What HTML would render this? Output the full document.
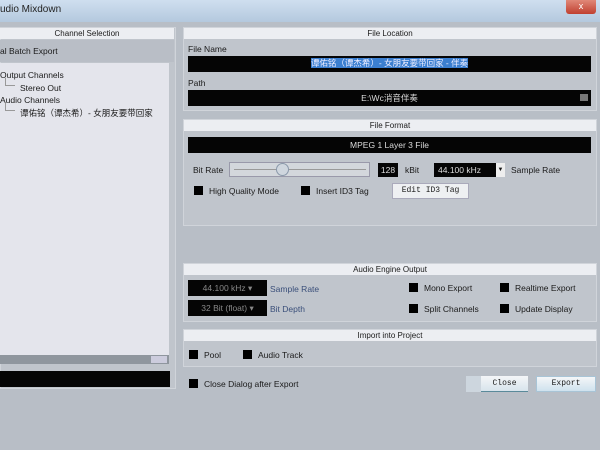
<!DOCTYPE html><html><head><meta charset="utf-8"><style>
*{margin:0;padding:0;box-sizing:border-box}
body{width:600px;height:450px;overflow:hidden;background:#b8bec6;font-family:"Liberation Sans","Noto Sans CJK SC",sans-serif;font-size:8.5px;color:#1a1a1a;position:relative}
.a{position:absolute}
.blk{background:#050505;color:#ddd;text-align:center}
.hdr{background:#eceef2;text-align:center;line-height:11px;font-size:8px}
.box{background:#c0c5cc;border:1px solid #d0d4da}
.cb{width:9px;height:9px;background:#000}
</style></head><body>
<div class="a" style="left:0;top:0;width:600px;height:22px;background:linear-gradient(#cfdfef,#b4c9de);"></div>
<div class="a" style="left:0;top:4px;font-size:10px;color:#222">udio Mixdown</div>
<div class="a" style="left:566px;top:0;width:30px;height:14px;background:linear-gradient(#e08878,#c04030);border-radius:0 0 3px 3px;color:#fff;text-align:center;font-size:9px;line-height:13px">x</div>
<div class="a" style="left:0;top:22px;width:600px;height:428px;background:#b8bec6"></div>

<div class="a box" style="left:0;top:27px;width:176px;height:362px"></div>
<div class="a hdr" style="left:0;top:28px;width:174px">Channel Selection</div>
<div class="a" style="left:0;top:40px;width:174px;height:22px;background:#b9bec6"></div>
<div class="a" style="left:0;top:46px">al Batch Export</div>
<div class="a" style="left:0;top:63px;width:169px;height:292px;background:#e4e5ec"></div>
<div class="a" style="left:0;top:70px">Output Channels</div>
<div class="a" style="left:5px;top:78px;width:10px;height:8px;border-left:1px solid #999;border-bottom:1px solid #999"></div>
<div class="a" style="left:20px;top:83px">Stereo Out</div>
<div class="a" style="left:0;top:95px">Audio Channels</div>
<div class="a" style="left:5px;top:103px;width:10px;height:8px;border-left:1px solid #999;border-bottom:1px solid #999"></div>
<div class="a" style="left:20px;top:107px;white-space:nowrap">谭佑铭（谭杰希）- 女朋友要带回家</div>
<div class="a" style="left:0;top:355px;width:169px;height:9px;background:#8f969e"></div>
<div class="a" style="left:151px;top:356px;width:16px;height:7px;background:#ccd"></div>
<div class="a" style="left:0;top:371px;width:170px;height:16px;background:#050505"></div>

<div class="a box" style="left:183px;top:27px;width:414px;height:84px"></div>
<div class="a hdr" style="left:184px;top:28px;width:412px">File Location</div>
<div class="a" style="left:188px;top:44px">File Name</div>
<div class="a blk" style="left:188px;top:56px;width:403px;height:16px"><span style="background:#3b7fd0;color:#eef;line-height:14px">谭佑铭（谭杰希）- 女朋友要带回家 - 伴奏</span></div>
<div class="a" style="left:188px;top:78px">Path</div>
<div class="a blk" style="left:188px;top:90px;width:403px;height:16px;line-height:16px">E:\Wc消音伴奏</div>
<div class="a" style="left:580px;top:94px;width:8px;height:7px;background:#777"></div>

<div class="a box" style="left:183px;top:119px;width:414px;height:107px"></div>
<div class="a hdr" style="left:184px;top:120px;width:412px">File Format</div>
<div class="a blk" style="left:188px;top:137px;width:403px;height:16px;line-height:16px">MPEG 1 Layer 3 File</div>
<div class="a" style="left:193px;top:165px">Bit Rate</div>
<div class="a" style="left:229px;top:162px;width:141px;height:15px;background:#d3d7dc;border:1px solid #99a"></div>
<div class="a" style="left:234px;top:169px;width:132px;height:1px;background:#999"></div>
<div class="a" style="left:276px;top:163px;width:13px;height:13px;border-radius:50%;background:#cfd6de;border:1px solid #8a98aa"></div>
<div class="a blk" style="left:378px;top:163px;width:20px;height:14px;line-height:14px">128</div>
<div class="a" style="left:405px;top:165px">kBit</div>
<div class="a blk" style="left:434px;top:163px;width:62px;height:14px;line-height:14px;text-align:left;padding-left:4px">44.100 kHz</div>
<div class="a" style="left:496px;top:163px;width:9px;height:14px;background:#eee;font-size:6px;text-align:center;line-height:14px">▼</div>
<div class="a" style="left:511px;top:165px">Sample Rate</div>
<div class="a cb" style="left:194px;top:186px"></div><div class="a" style="left:209px;top:186px">High Quality Mode</div>
<div class="a cb" style="left:301px;top:186px"></div><div class="a" style="left:316px;top:186px">Insert ID3 Tag</div>
<div class="a" style="left:392px;top:183px;width:77px;height:16px;background:#eef0f2;border:1px solid #aab;font-family:'Liberation Mono',monospace;font-size:8px;text-align:center;line-height:14px">Edit ID3 Tag</div>

<div class="a box" style="left:183px;top:263px;width:414px;height:59px"></div>
<div class="a hdr" style="left:184px;top:264px;width:412px">Audio Engine Output</div>
<div class="a blk" style="left:188px;top:280px;width:79px;height:16px;line-height:16px;color:#888">44.100 kHz ▾</div>
<div class="a" style="left:270px;top:284px;color:#3a4f7a">Sample Rate</div>
<div class="a blk" style="left:188px;top:300px;width:79px;height:16px;line-height:16px;color:#888">32 Bit (float) ▾</div>
<div class="a" style="left:270px;top:304px;color:#3a4f7a">Bit Depth</div>
<div class="a cb" style="left:409px;top:283px"></div><div class="a" style="left:424px;top:283px">Mono Export</div>
<div class="a cb" style="left:409px;top:304px"></div><div class="a" style="left:424px;top:304px">Split Channels</div>
<div class="a cb" style="left:500px;top:283px"></div><div class="a" style="left:515px;top:283px">Realtime Export</div>
<div class="a cb" style="left:500px;top:304px"></div><div class="a" style="left:515px;top:304px">Update Display</div>

<div class="a box" style="left:183px;top:329px;width:414px;height:38px"></div>
<div class="a hdr" style="left:184px;top:330px;width:412px">Import into Project</div>
<div class="a cb" style="left:189px;top:350px"></div><div class="a" style="left:204px;top:350px">Pool</div>
<div class="a cb" style="left:243px;top:350px"></div><div class="a" style="left:258px;top:350px">Audio Track</div>
<div class="a cb" style="left:189px;top:379px"></div><div class="a" style="left:204px;top:379px">Close Dialog after Export</div>
<div class="a" style="left:466px;top:376px;width:15px;height:16px;background:#cdd6de"></div>
<div class="a" style="left:481px;top:376px;width:47px;height:16px;background:linear-gradient(#f4f6f8,#d8e4ec);border-bottom:1px solid #5a8a9a;font-family:'Liberation Mono',monospace;font-size:8px;text-align:center;line-height:15px">Close</div>
<div class="a" style="left:536px;top:376px;width:60px;height:16px;background:linear-gradient(#f4f6f8,#cfe2ee);border:1px solid #a8c4d6;font-family:'Liberation Mono',monospace;font-size:8px;text-align:center;line-height:14px">Export</div>
</body></html>
